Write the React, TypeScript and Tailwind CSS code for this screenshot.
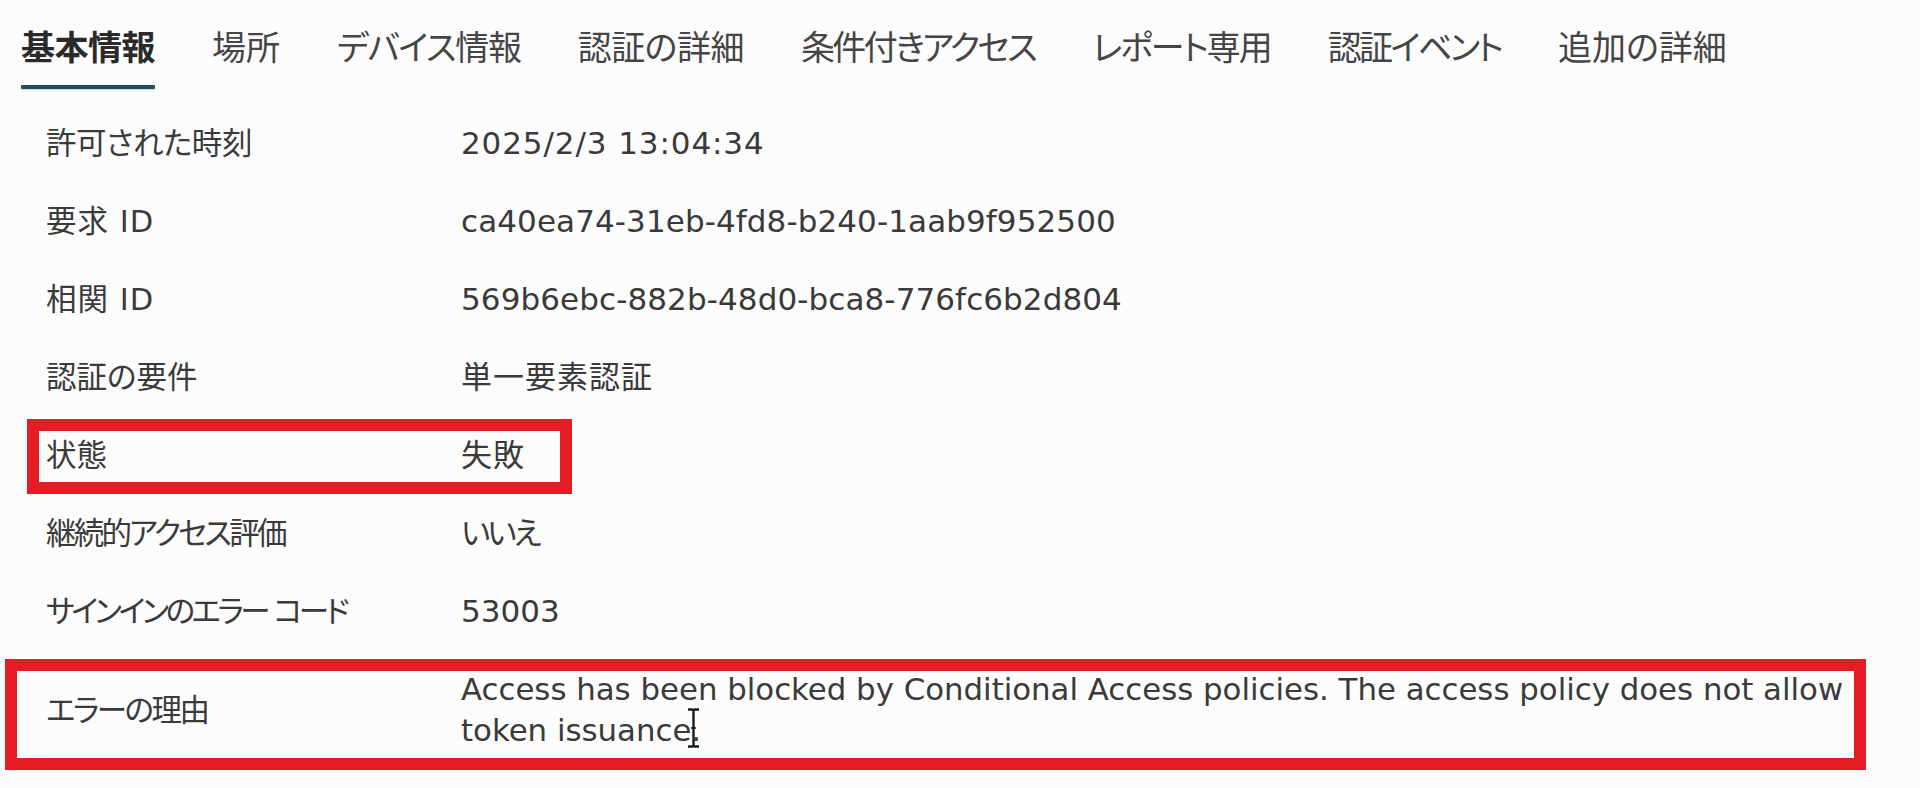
import React from "react";

const tabs: { t: string; c: string }[] = [
  { t: "基本情報", c: "tracking-[-0.5px]" },
  { t: "場所", c: "tracking-[0px]" },
  { t: "デバイス情報", c: "tracking-[-1.3px]" },
  { t: "認証の詳細", c: "tracking-[-0.5px]" },
  { t: "条件付きアクセス", c: "tracking-[-2.6px]" },
  { t: "レポート専用", c: "tracking-[-2px]" },
  { t: "認証イベント", c: "tracking-[-2.6px]" },
  { t: "追加の詳細", c: "tracking-[0px]" },
];

type Row = { label: string; lc: string; value: string; vc: string; box?: boolean };

const rows: Row[] = [
  { label: "許可された時刻", lc: "tracking-[-0.4px]", value: "2025/2/3 13:04:34", vc: "tracking-[0.9px]" },
  { label: "要求 ID", lc: "tracking-[1px]", value: "ca40ea74-31eb-4fd8-b240-1aab9f952500", vc: "tracking-[0.1px]" },
  { label: "相関 ID", lc: "tracking-[1px]", value: "569b6ebc-882b-48d0-bca8-776fc6b2d804", vc: "tracking-[0.1px]" },
  { label: "認証の要件", lc: "tracking-[0px]", value: "単一要素認証", vc: "tracking-[1px]" },
  { label: "状態", lc: "tracking-[0px]", value: "失敗", vc: "tracking-[1px]", box: true },
  { label: "継続的アクセス評価", lc: "tracking-[-2.7px]", value: "いいえ", vc: "tracking-[-3px]" },
  { label: "サインインのエラー コード", lc: "tracking-[-3.4px]", value: "53003", vc: "tracking-[0px]" },
];

function IBeam() {
  return (
    <svg
      className="absolute left-[225px] top-[38px]"
      width="15"
      height="42"
      viewBox="0 0 15 42"
      fill="none"
    >
      <path
        d="M2 2.5h4c1 0 1.5 0.6 1.5 1.6V38c0 1-0.5 1.5-1.5 1.5H2M13 2.5H9c-1 0-1.5 0.6-1.5 1.6V38c0 1 0.5 1.5 1.5 1.5H13"
        stroke="#1a1a1a"
        strokeWidth="2.4"
      />
      <path d="M5 21h5" stroke="#1a1a1a" strokeWidth="1.6" />
    </svg>
  );
}

export default function App() {
  return (
    <div className="w-[1920px] h-[788px] overflow-hidden bg-[#fcfcfd] text-[#3a3a3a] font-['DejaVu_Sans','Noto_Sans_CJK_JP',sans-serif] [font-feature-settings:'palt']">
      <div className="flex gap-[57px] pl-[21px] pt-[26px]">
        {tabs.map((tab, i) => (
          <div key={tab.t} className="flex flex-col">
            <span
              className={
                i === 0
                  ? `text-[34px] leading-[44px] font-bold text-[#2a2a2a] ${tab.c}`
                  : `text-[34px] leading-[44px] text-[#454545] ${tab.c}`
              }
            >
              {tab.t}
            </span>
            <div
              className={
                i === 0
                  ? "mt-[15px] h-[4px] rounded-[1px] bg-[#2b4a55] shadow-[0_1px_2px_rgba(120,210,230,0.7)]"
                  : "mt-[15px] h-[4px]"
              }
            />
          </div>
        ))}
      </div>

      <div className="mt-[15px] flex flex-col text-[31px] leading-[41px]">
        {rows.map((r) => (
          <div key={r.label} className="relative flex h-[78px] items-center pl-[46px]">
            <div className={`w-[415px] shrink-0 text-[30.5px] ${r.lc}`}>{r.label}</div>
            <div className={`whitespace-nowrap ${r.vc}`}>{r.value}</div>
            {r.box && (
              <div className="absolute left-[27px] top-[3px] h-[75px] w-[545px] border-[12px] border-[#e41c24]" />
            )}
          </div>
        ))}
        <div className="relative flex h-[120px] items-center pl-[46px]">
          <div className="w-[415px] shrink-0 text-[30.5px] tracking-[-2.4px]">エラーの理由</div>
          <div className="relative whitespace-nowrap text-[30.8px]">
            Access has been blocked by Conditional Access policies. The access policy does not allow
            <br />
            token issuance.
            <IBeam />
          </div>
          <div className="absolute left-[5px] top-[9px] h-[111px] w-[1861px] border-[12px] border-[#e41c24]" />
        </div>
      </div>
    </div>
  );
}
